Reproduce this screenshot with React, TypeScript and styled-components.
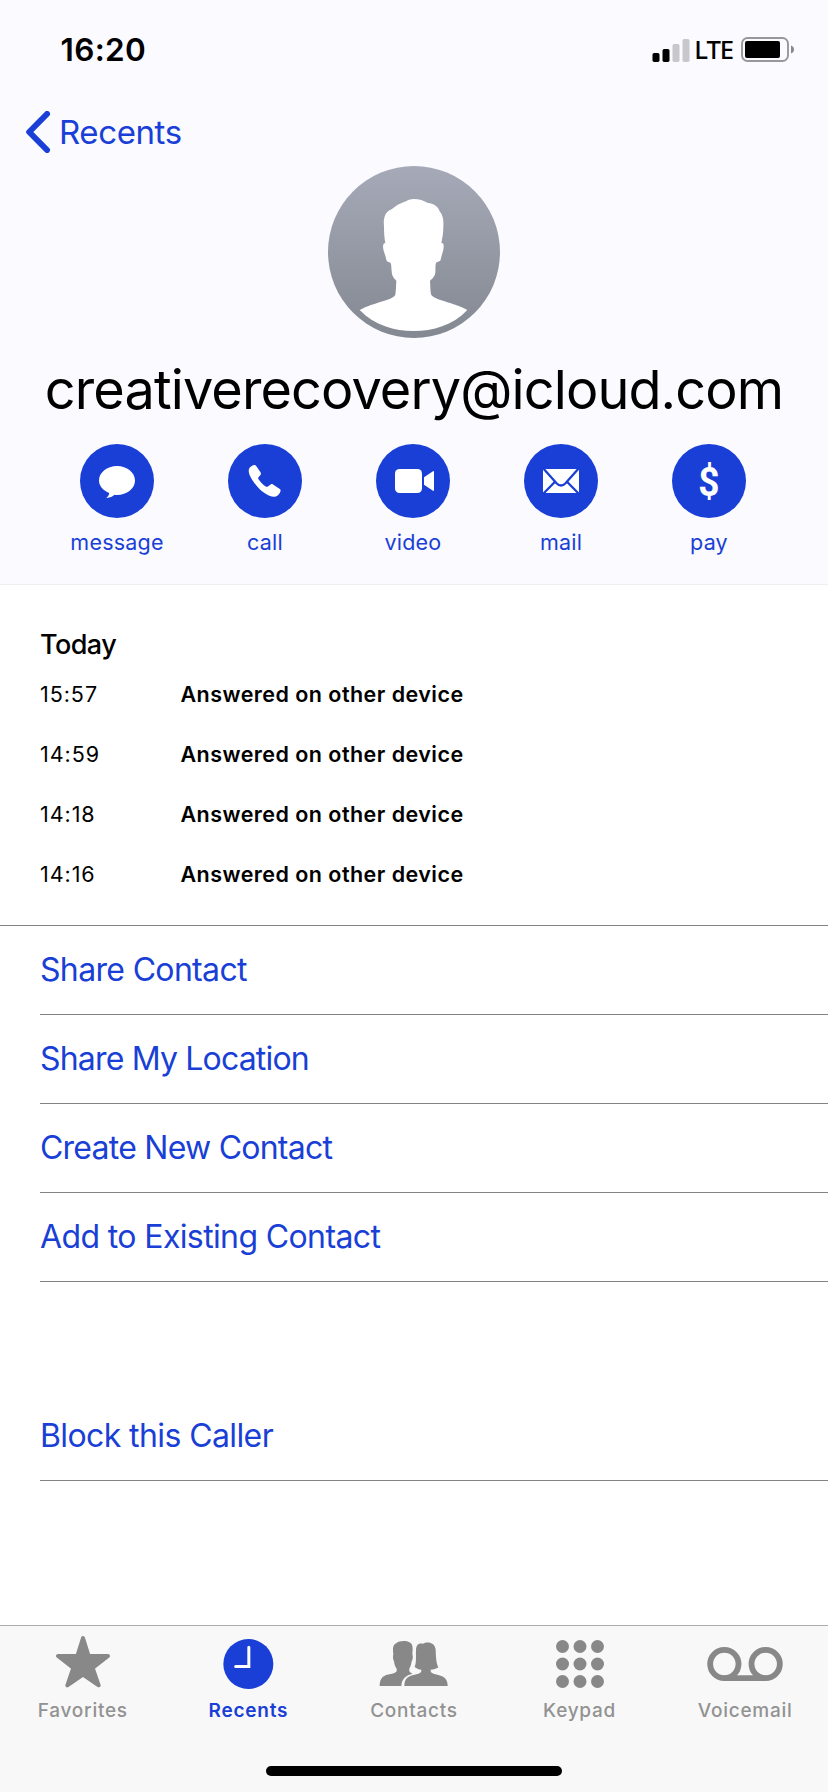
import React from 'react';
import styled, { createGlobalStyle } from 'styled-components';

const blue = '#193fd6';
const grey = '#888888';

const GlobalStyle = createGlobalStyle`
  * { box-sizing: border-box; }
  body {
    margin: 0;
    background: #fff;
    color: #000;
    font-family: Inter, 'Liberation Sans', sans-serif;
  }
`;

const Screen = styled.div`
  display: flex;
  flex-direction: column;
  width: 828px;
  height: 1792px;
  background: #fff;
  overflow: hidden;
`;

const Header = styled.header`
  height: 585px;
  background: #fafaff;
  border-bottom: 1px solid #efeff3;
`;

const StatusBar = styled.div`
  display: flex;
  align-items: center;
  justify-content: space-between;
  height: 99px;
  padding: 0 33px 0 60.5px;
`;

const Clock = styled.span`
  font-size: 31.5px;
  font-weight: 600;
  line-height: 40px;
  letter-spacing: 0.35px;
`;

const StatusIcons = styled.div`
  display: flex;
  align-items: center;
`;

const Network = styled.span`
  margin: 1px 8px 0 4px;
  font-family: 'Noto Sans', sans-serif;
  font-size: 25.7px;
  font-weight: 500;
  line-height: 36px;
  letter-spacing: -1.1px;
`;

const BackButton = styled.button`
  display: flex;
  align-items: center;
  gap: 8px;
  height: 66px;
  padding: 0 0 0 25px;
  border: 0;
  background: none;
  color: ${blue};
  font: 400 33px/40px Inter, sans-serif;
  letter-spacing: -0.4px;
`;

const Avatar = styled.svg`
  display: block;
  width: 172px;
  height: 172px;
  margin: 1px auto 0 328px;
`;

const Title = styled.h1`
  height: 106px;
  margin: 0;
  padding-bottom: 3px;
  font-size: 54px;
  font-weight: 400;
  line-height: 103px;
  letter-spacing: -0.88px;
  text-align: center;
`;

const Actions = styled.div`
  display: grid;
  grid-template-columns: repeat(5, 148px);
  padding-left: 43px;
`;

const Action = styled.button`
  display: flex;
  flex-direction: column;
  align-items: center;
  gap: 10px;
  padding: 0;
  border: 0;
  background: none;
  color: ${blue};
  font: 400 21.5px/28px Inter, sans-serif;
  letter-spacing: 0.2px;
`;

const ActionCircle = styled.span`
  display: flex;
  align-items: center;
  justify-content: center;
  width: 74px;
  height: 74px;
  border-radius: 50%;
  background: ${blue};
  color: #fff;
`;

const Dollar = styled.span`
  font: 700 41px/74px Roboto, sans-serif;
  letter-spacing: 0;
  transform: translateY(1px) scaleX(0.9);
`;

const History = styled.section`
  height: 341px;
  padding: 44px 0 0 40px;
  border-bottom: 1px solid #838387;
`;

const HistoryTitle = styled.h2`
  margin: 0 0 3px;
  font-size: 27px;
  font-weight: 500;
  line-height: 32px;
  letter-spacing: -0.55px;
`;

const CallRow = styled.div`
  display: grid;
  grid-template-columns: 140.5px 1fr;
  height: 60px;
  font-size: 21.5px;
  line-height: 60px;
`;

const CallTime = styled.span`
  letter-spacing: 0.95px;
`;

const CallStatus = styled.span`
  font-weight: 600;
  letter-spacing: 0.46px;
`;

const List = styled.div<{ $gap?: number }>`
  margin-top: ${({ $gap = 0 }) => $gap}px;
  padding-left: 40px;
`;

const ListButton = styled.button<{ $spacing: number }>`
  display: block;
  width: 100%;
  height: 89px;
  padding: 0;
  border: 0;
  border-bottom: 1px solid #838387;
  background: none;
  color: ${blue};
  font: 400 32px/88px Inter, sans-serif;
  letter-spacing: ${({ $spacing }) => $spacing}px;
  text-align: left;
`;

const TabBar = styled.nav`
  display: grid;
  grid-template-columns: repeat(5, 1fr);
  grid-template-rows: 130px 10px;
  height: 167px;
  margin-top: auto;
  padding-top: 10px;
  border-top: 1px solid #adadad;
  background: #f8f8f8;
`;

const Tab = styled.button<{ $active?: boolean }>`
  display: flex;
  flex-direction: column;
  align-items: center;
  gap: 7px;
  padding: 0;
  border: 0;
  background: none;
  color: ${({ $active }) => ($active ? blue : '#929292')};
  font: ${({ $active }) => ($active ? 600 : 500)} 19px/24px Inter, sans-serif;
  letter-spacing: 0.75px;
`;

const TabGlyph = styled.svg<{ $active?: boolean }>`
  width: 80px;
  height: 56px;
  fill: ${({ $active }) => ($active ? blue : grey)};
`;

const HomeIndicator = styled.div`
  grid-column: 1 / -1;
  justify-self: center;
  width: 296px;
  height: 10px;
  border-radius: 5px;
  background: #000;
`;

const Glyph = ({ children }: { children: React.ReactNode }) => (
  <svg width="74" height="74" viewBox="0 0 74 74" fill="#fff">{children}</svg>
);

const actions = [
  {
    label: 'message',
    icon: (
      <Glyph>
        <path d="M37 22c10 0 18 6.500 18 14.500S47 51 37 51c-1 0-1.800 0-2.600-.2-1.700 1.700-5.200 3.400-8.200 3.100 1.700-1.200 2.900-2.900 3-4.900C23.300 46.600 19 42.100 19 36.500 19 28.500 27 22 37 22z" />
      </Glyph>
    ),
  },
  {
    label: 'call',
    icon: (
      <Glyph>
        <path d="M21 25c.8-2 3-3.600 5-4 1-.2 1.700.2 2.200 1l4.300 6.300c.6.900.5 1.800 0 2.600l-2 2.400c-.5.700-.4 1.400 0 2 2 3 4.300 5.200 7.200 7.200.8.500 1.500.4 2.200-.1l2.800-2c.8-.5 1.500-.5 2.300 0l6.800 4.600c.8.600 1 1.300.7 2.200-.8 2.500-2.500 4.600-4.700 5.400-3 1-8-1-13.500-5.200C28 42.200 19 30.500 21 25z" />
      </Glyph>
    ),
  },
  {
    label: 'video',
    icon: (
      <Glyph>
        <rect x="19" y="25" width="27" height="24" rx="4.500" />
        <path d="M48 33.200 57 27.200q1-.5 1 .6v18.400q0 1.100-1 .6L48 40.800z" />
      </Glyph>
    ),
  },
  {
    label: 'mail',
    icon: (
      <Glyph>
        <rect x="19" y="25" width="36" height="24" />
        <g fill="none" stroke={blue} strokeWidth="2.300">
          <path d="M18.500 23.500 32.500 39.200q4.500 4.600 9 0L55.500 23.500" />
          <path d="M18.500 50.500 31 37.800M55.500 50.500 43 37.800" />
        </g>
      </Glyph>
    ),
  },
  { label: 'pay', icon: <Dollar>$</Dollar> },
];

const calls = ['15:57', '14:59', '14:18', '14:16'];

const contactLinks = [
  { label: 'Share Contact', spacing: -0.66 },
  { label: 'Share My Location', spacing: -0.82 },
  { label: 'Create New Contact', spacing: -0.76 },
  { label: 'Add to Existing Contact', spacing: -0.62 },
];

const dots = [442.5, 495, 547.5].flatMap((x) => [109.5, 162, 214.5].map((y) => ({ x, y })));

const tabs = [
  {
    label: 'Favorites',
    viewBox: '129 78 240 168',
    icon: (
      <polygon
        points="249,84.500 266,138 324,138 278,174 296,226 249,194 202,226 220,174 174,138 232,138"
        stroke={grey}
        strokeWidth="12"
        strokeLinejoin="round"
      />
    ),
  },
  {
    label: 'Recents',
    active: true,
    viewBox: '626 78 240 168',
    icon: (
      <>
        <circle cx="747" cy="162" r="75" />
        <path d="M748.500 112V169.500H709" fill="none" stroke="#fff" strokeWidth="9" strokeLinecap="round" />
      </>
    ),
  },
  {
    label: 'Contacts',
    viewBox: '10 18 240 168',
    icon: (
      <>
        <path d="M27 168C27 142 40 135 60 132C74 129 80 126 78 116C74 111 71 104 70 94C67 88 66 80 68 72C66 55 66 44 78 39C85 32 108 31 116 37C127 41 127 55 125 72C128 80 126 90 123 94C122 104 119 111 116 116C114 124 119 128 126 131C106 136 93 146 92 168Z" />
        <path d="M101 168C101 145 112 138 132 134C146 131 153 128 152 119C145 119 138 116 132 111C138 95 135 80 136 62C136 45 143 38 157 41C170 33 194 37 195 60C196 85 197 100 203 112C197 117 188 119 180 119C179 128 186 131 200 134C222 139 231 148 231 168Z" />
      </>
    ),
  },
  {
    label: 'Keypad',
    viewBox: '375 78 240 168',
    icon: dots.map(({ x, y }) => <circle key={`${x}-${y}`} cx={x} cy={y} r="19.500" />),
  },
  {
    label: 'Voicemail',
    viewBox: '870 78 240 168',
    icon: (
      <g fill="none" stroke={grey} strokeWidth="17.500">
        <circle cx="928" cy="162" r="42.500" />
        <circle cx="1052" cy="162" r="42.500" />
        <path d="M928 204.200H1052" />
      </g>
    ),
  },
];

export default function App() {
  return (
    <Screen>
      <GlobalStyle />
      <Header>
        <StatusBar>
          <Clock>16:20</Clock>
          <StatusIcons>
            <svg width="38" height="24" viewBox="0 0 38 24">
              <rect x="0.500" y="15" width="7" height="9" rx="1.700" />
              <rect x="10.500" y="11" width="7" height="13" rx="1.700" />
              <rect x="20.500" y="6" width="7" height="18" rx="1.700" fill="#c8c8cc" />
              <rect x="30.500" y="1" width="7" height="23" rx="1.700" fill="#c8c8cc" />
            </svg>
            <Network>LTE</Network>
            <svg width="54" height="25" viewBox="0 0 54 25">
              <rect x="1" y="1" width="46" height="23" rx="5.500" fill="none" stroke="#98989b" strokeWidth="1.900" />
              <rect x="4" y="4" width="35" height="17" rx="2" />
              <path d="M50 8.500q3 1.200 3 4t-3 4z" fill="#88888b" />
            </svg>
          </StatusIcons>
        </StatusBar>
        <BackButton>
          <svg width="26" height="42" viewBox="0 0 26 42" fill="none" stroke={blue} strokeWidth="6" strokeLinecap="round" strokeLinejoin="round">
            <path d="M22 3 4.200 21 22 39" />
          </svg>
          Recents
        </BackButton>
        <Avatar viewBox="55 48 516 516">
          <defs>
            <linearGradient id="avatar" x1="0" y1="0" x2="0" y2="1">
              <stop offset="0" stopColor="#a6aab8" />
              <stop offset="1" stopColor="#848891" />
            </linearGradient>
          </defs>
          <circle cx="313" cy="306" r="258" fill="url(#avatar)" />
          <path
            fill="#fff"
            d="M312 147C328 147 343 152 355 159C374 161 386 171 390 184C401 197 402 212 401 230C401 248 398 264 395 279Q402 278 402 288C402 302 397 311 394 325Q393 335 385 335Q378 336 378 343C376 356 379 368 375 376Q370 387 361 392C362 408 362 420 364 433C371 451 430 456 473 480C428 527 370 543 312 543C254 543 196 527 150 480C193 456 250 451 257 434C259 420 259 408 260 392Q252 387 248 376C245 366 246 355 244 342Q243 336 236 336Q230 335 229 325C226 311 220 302 220 288Q221 278 227 279C224 264 223 248 223 230C221 210 223 186 246 178C264 160 286 156 298 149Q305 147 312 147Z"
          />
        </Avatar>
        <Title>creativerecovery@icloud.com</Title>
        <Actions>
          {actions.map(({ label, icon }) => (
            <Action key={label}>
              <ActionCircle>{icon}</ActionCircle>
              {label}
            </Action>
          ))}
        </Actions>
      </Header>

      <History>
        <HistoryTitle>Today</HistoryTitle>
        {calls.map((time) => (
          <CallRow key={time}>
            <CallTime>{time}</CallTime>
            <CallStatus>Answered on other device</CallStatus>
          </CallRow>
        ))}
      </History>

      <List>
        {contactLinks.map(({ label, spacing }) => (
          <ListButton key={label} $spacing={spacing}>{label}</ListButton>
        ))}
      </List>
      <List $gap={110}>
        <ListButton $spacing={-0.6}>Block this Caller</ListButton>
      </List>

      <TabBar>
        {tabs.map(({ label, viewBox, icon, active }) => (
          <Tab key={label} $active={active}>
            <TabGlyph viewBox={viewBox} $active={active}>{icon}</TabGlyph>
            {label}
          </Tab>
        ))}
        <HomeIndicator />
      </TabBar>
    </Screen>
  );
}
